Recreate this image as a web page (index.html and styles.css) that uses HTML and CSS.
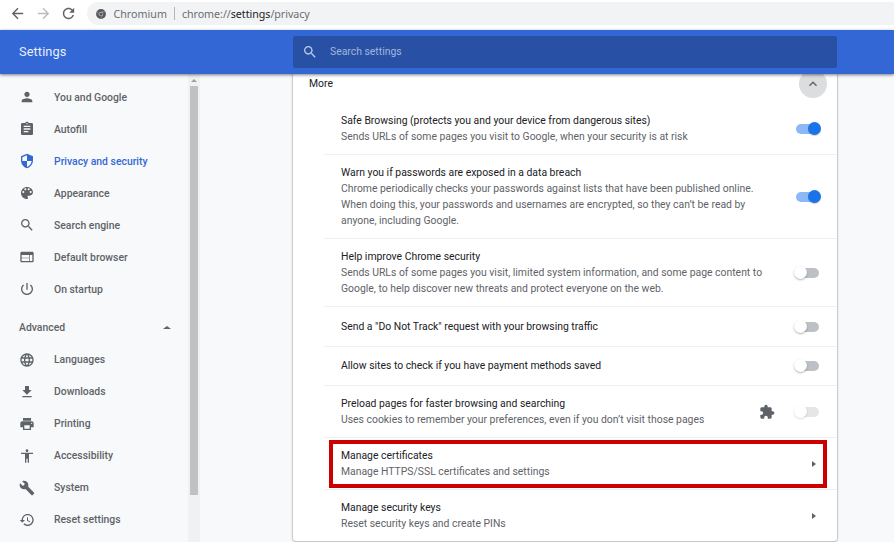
FILE: index.html
```html
<!DOCTYPE html>
<html lang="en">
<head>
<meta charset="utf-8">
<title>Settings</title>
<link rel="stylesheet" href="styles.css">
</head>
<body>
<div class="browser">
  <svg class="nav" viewBox="0 0 24 24"><path d="M20 11H7.83l5.59-5.59L12 4l-8 8 8 8 1.41-1.41L7.83 13H20v-2z"/></svg>
  <svg class="nav dim" viewBox="0 0 24 24"><path d="M12 4l-1.41 1.41L16.17 11H4v2h12.17l-5.58 5.59L12 20l8-8z"/></svg>
  <svg class="nav" viewBox="0 0 24 24"><path d="M17.65 6.35C16.2 4.9 14.21 4 12 4c-4.42 0-7.99 3.58-7.99 8s3.57 8 7.99 8c3.73 0 6.84-2.55 7.73-6h-2.08c-.82 2.33-3.04 4-5.65 4-3.31 0-6-2.69-6-6s2.69-6 6-6c1.66 0 3.14.69 4.22 1.78L13 11h7V4l-2.35 2.35z"/></svg>
  <div class="omnibox">
    <svg class="chip" viewBox="0 0 20 20"><circle cx="10" cy="10" r="9.8" fill="#55585c"/><g stroke="#a8abaf" stroke-width="1.2"><path d="M10 5.7h8.5M6.3 12.2L2 4.8M13.7 12.2L9.5 19.4"/></g><circle cx="10" cy="10" r="4.4" fill="#b9bbbe"/><circle cx="10" cy="10" r="3.2" fill="#55585c"/></svg>
    <span class="origin">Chromium</span><span class="bar"></span><span class="url">chrome://<b>settings</b>/privacy</span>
  </div>
</div>
<header class="toolbar">
  <h1>Settings</h1>
  <div class="search">
    <svg viewBox="0 0 24 24"><path d="M15.5 14h-.79l-.28-.27C15.41 12.59 16 11.11 16 9.5 16 5.91 13.09 3 9.5 3S3 5.91 3 9.5 5.91 16 9.5 16c1.61 0 3.09-.59 4.23-1.57l.27.28v.79l5 4.99L20.49 19l-4.99-5zm-6 0C7.01 14 5 11.99 5 9.5S7.01 5 9.5 5 14 7.01 14 9.5 11.99 14 9.5 14z"/></svg>
    <span>Search settings</span>
  </div>
</header>
<div class="main">
  <nav class="side">
    <a><svg viewBox="0 0 24 24"><path d="M12 12c2.21 0 4-1.79 4-4s-1.79-4-4-4-4 1.79-4 4 1.79 4 4 4zm0 2c-2.67 0-8 1.34-8 4v2h16v-2c0-2.66-5.33-4-8-4z"/></svg><span>You and Google</span></a>
    <a><svg viewBox="0 0 24 24"><path d="M19 3h-4.18C14.4 1.84 13.3 1 12 1c-1.3 0-2.4.84-2.82 2H5c-1.1 0-2 .9-2 2v14c0 1.1.9 2 2 2h14c1.1 0 2-.9 2-2V5c0-1.1-.9-2-2-2zm-7 0c.55 0 1 .45 1 1s-.45 1-1 1-1-.45-1-1 .45-1 1-1zm2 14H7v-2h7v2zm3-4H7v-2h10v2zm0-4H7V7h10v2z"/></svg><span>Autofill</span></a>
    <a class="active"><svg viewBox="0 0 24 24"><path d="M12 1L3 5v6c0 5.55 3.84 10.74 9 12 5.16-1.26 9-6.45 9-12V5l-9-4zm0 10.99h7c-.53 4.12-3.28 7.79-7 8.94V12H5V6.3l7-3.11v8.8z"/></svg><span>Privacy and security</span></a>
    <a><svg viewBox="0 0 24 24"><path d="M12 3c-4.97 0-9 4.03-9 9s4.03 9 9 9c.83 0 1.5-.67 1.5-1.5 0-.39-.15-.74-.39-1.01-.23-.26-.38-.61-.38-.99 0-.83.67-1.5 1.5-1.5H16c2.76 0 5-2.24 5-5 0-4.42-4.03-8-9-8zm-5.5 9c-.83 0-1.5-.67-1.5-1.5S5.67 9 6.5 9 8 9.67 8 10.5 7.33 12 6.5 12zm3-4C8.67 8 8 7.33 8 6.5S8.67 5 9.5 5s1.5.67 1.5 1.5S10.33 8 9.5 8zm5 0c-.83 0-1.5-.67-1.5-1.5S13.67 5 14.5 5s1.5.67 1.5 1.5S15.33 8 14.5 8zm3 4c-.83 0-1.5-.67-1.5-1.5S16.67 9 17.5 9s1.5.67 1.5 1.5-.67 1.5-1.5 1.5z"/></svg><span>Appearance</span></a>
    <a><svg viewBox="0 0 24 24"><path d="M15.5 14h-.79l-.28-.27C15.41 12.59 16 11.11 16 9.5 16 5.91 13.09 3 9.5 3S3 5.91 3 9.5 5.91 16 9.5 16c1.61 0 3.09-.59 4.23-1.57l.27.28v.79l5 4.99L20.49 19l-4.99-5zm-6 0C7.01 14 5 11.99 5 9.5S7.01 5 9.5 5 14 7.01 14 9.5 11.99 14 9.5 14z"/></svg><span>Search engine</span></a>
    <a><svg viewBox="0 0 24 24"><path d="M20 4H4c-1.1 0-1.99.9-1.99 2L2 18c0 1.1.9 2 2 2h16c1.1 0 2-.9 2-2V6c0-1.1-.9-2-2-2zm-5 14H4v-4h11v4zm0-5H4V9h11v4zm5 5h-4V9h4v9z"/></svg><span>Default browser</span></a>
    <a><svg viewBox="0 0 24 24"><path d="M13 3h-2v10h2V3zm4.83 2.17l-1.42 1.42C17.99 7.86 19 9.81 19 12c0 3.87-3.13 7-7 7s-7-3.13-7-7c0-2.19 1.01-4.14 2.58-5.42L6.17 5.17C4.23 6.82 3 9.26 3 12c0 4.97 4.03 9 9 9s9-4.03 9-9c0-2.74-1.23-5.18-3.17-6.83z"/></svg><span>On startup</span></a>
    <div class="advanced"><span>Advanced</span><i></i></div>
    <a><svg viewBox="0 0 24 24"><path d="M11.99 2C6.47 2 2 6.48 2 12s4.47 10 9.99 10C17.52 22 22 17.52 22 12S17.52 2 11.99 2zm6.93 6h-2.95c-.32-1.25-.78-2.45-1.38-3.56 1.84.63 3.37 1.91 4.33 3.56zM12 4.04c.83 1.2 1.48 2.53 1.91 3.96h-3.82c.43-1.43 1.08-2.76 1.91-3.96zM4.26 14C4.1 13.36 4 12.69 4 12s.1-1.36.26-2h3.38c-.08.66-.14 1.32-.14 2s.06 1.34.14 2H4.26zm.82 2h2.95c.32 1.25.78 2.45 1.38 3.56-1.84-.63-3.37-1.9-4.33-3.56zm2.95-8H5.08c.96-1.66 2.49-2.93 4.33-3.56C8.81 5.55 8.35 6.75 8.03 8zM12 19.96c-.83-1.2-1.48-2.53-1.91-3.96h3.82c-.43 1.43-1.08 2.76-1.91 3.96zM14.34 14H9.66c-.09-.66-.16-1.32-.16-2s.07-1.35.16-2h4.68c.09.65.16 1.32.16 2s-.07 1.34-.16 2zm.25 5.56c.6-1.11 1.06-2.31 1.38-3.56h2.95c-.96 1.65-2.49 2.93-4.33 3.56zM16.36 14c.08-.66.14-1.32.14-2s-.06-1.34-.14-2h3.38c.16.64.26 1.31.26 2s-.1 1.36-.26 2h-3.38z"/></svg><span>Languages</span></a>
    <a><svg viewBox="0 0 24 24"><path d="M19 9h-4V3H9v6H5l7 7 7-7zM5 18v2h14v-2H5z"/></svg><span>Downloads</span></a>
    <a><svg viewBox="0 0 24 24"><path d="M19 8H5c-1.66 0-3 1.34-3 3v6h4v4h12v-4h4v-6c0-1.66-1.34-3-3-3zm-3 11H8v-5h8v5zm3-7c-.55 0-1-.45-1-1s.45-1 1-1 1 .45 1 1-.45 1-1 1zm-1-9H6v4h12V3z"/></svg><span>Printing</span></a>
    <a><svg viewBox="0 0 24 24"><path d="M12 2c1.1 0 2 .9 2 2s-.9 2-2 2-2-.9-2-2 .9-2 2-2zm9 7h-6v13h-2v-6h-2v6H9V9H3V7h18v2z"/></svg><span>Accessibility</span></a>
    <a><svg viewBox="0 0 24 24"><path d="M22.7 19l-9.1-9.1c.9-2.3.4-5-1.5-6.9-2-2-5-2.4-7.4-1.3L9 6 6 9 1.6 4.7C.4 7.1.9 10.1 2.9 12.1c1.9 1.9 4.6 2.4 6.9 1.5l9.1 9.1c.4.4 1 .4 1.4 0l2.3-2.3c.5-.4.5-1.1.1-1.4z"/></svg><span>System</span></a>
    <a><svg viewBox="0 0 24 24"><path d="M13 3c-4.97 0-9 4.03-9 9H1l3.89 3.89.07.14L9 12H6c0-3.87 3.13-7 7-7s7 3.13 7 7-3.13 7-7 7c-1.93 0-3.68-.79-4.94-2.06l-1.42 1.42C8.27 19.99 10.51 21 13 21c4.97 0 9-4.03 9-9s-4.03-9-9-9zm-1 5v5l4.28 2.54.72-1.21-3.5-2.08V8H12z"/></svg><span>Reset settings</span></a>
  </nav>
  <div class="scroll"><i class="up"></i><div class="thumb"></div></div>
  <section class="card">
    <div class="more"><span>More</span><div class="round"><svg viewBox="0 0 24 24"><path d="M12 8l-6 6 1.41 1.41L12 10.83l4.59 4.58L18 14z"/></svg></div></div>
    <div class="row r1"><div class="text"><p>Safe Browsing (protects you and your device from dangerous sites)</p><p class="sub">Sends URLs of some pages you visit to Google, when your security is at risk</p></div><div class="toggle on"></div></div>
    <div class="row r2"><div class="text"><p>Warn you if passwords are exposed in a data breach</p><p class="sub">Chrome periodically checks your passwords against lists that have been published online.<br>When doing this, your passwords and usernames are encrypted, so they can’t be read by<br>anyone, including Google.</p></div><div class="toggle on"></div></div>
    <div class="row r3"><div class="text"><p>Help improve Chrome security</p><p class="sub">Sends URLs of some pages you visit, limited system information, and some page content to<br>Google, to help discover new threats and protect everyone on the web.</p></div><div class="toggle"></div></div>
    <div class="row r4 dnt"><div class="text"><p>Send a "Do Not Track" request with your browsing traffic</p></div><div class="toggle"></div></div>
    <div class="row r4"><div class="text"><p>Allow sites to check if you have payment methods saved</p></div><div class="toggle"></div></div>
    <div class="row r1"><div class="text"><p>Preload pages for faster browsing and searching</p><p class="sub">Uses cookies to remember your preferences, even if you don’t visit those pages</p></div><svg class="puzzle" viewBox="0 0 24 24"><path d="M20.5 11H19V7c0-1.1-.9-2-2-2h-4V3.5C13 2.12 11.88 1 10.5 1S8 2.12 8 3.5V5H4c-1.1 0-1.99.9-1.99 2v3.8H3.5c1.49 0 2.7 1.21 2.7 2.7s-1.21 2.7-2.7 2.7H2V20c0 1.1.9 2 2 2h3.8v-1.5c0-1.49 1.21-2.7 2.7-2.7 1.49 0 2.7 1.21 2.7 2.7V22H17c1.1 0 2-.9 2-2v-4h1.5c1.38 0 2.5-1.12 2.5-2.5S21.88 11 20.5 11z"/></svg><div class="toggle off"></div></div>
    <div class="row r1 marked"><div class="text"><p>Manage certificates</p><p class="sub">Manage HTTPS/SSL certificates and settings</p></div><i class="arrow"></i></div>
    <div class="row r1"><div class="text"><p>Manage security keys</p><p class="sub">Reset security keys and create PINs</p></div><i class="arrow"></i></div>
  </section>
</div>
</body>
</html>
```
FILE: styles.css
```css
*, *::before, *::after { box-sizing: border-box; }
body { margin: 0; width: 894px; height: 542px; overflow: hidden; display: flex; flex-direction: column; background: #f8f9fa; font-family: Roboto, sans-serif; font-size: 10.4px; line-height: 16px; color: #202124; }
p, h1 { margin: 0; white-space: nowrap; }
svg { fill: #5f6368; flex: none; display: block; }

.browser { height: 30px; flex: none; background: #fff; display: flex; align-items: center; padding: 0 0 3px 9px; }
.nav { width: 17px; height: 17px; margin-right: 8.5px; }
.nav.dim { fill: #b9bbbd; }
.omnibox { flex: 1; height: 23px; border-radius: 12px 0 0 12px; background: #f1f3f4; display: flex; align-items: center; padding-left: 9px; margin-left: 1px; font-family: "Noto Sans", sans-serif; font-size: 10.7px; color: #6b6e72; white-space: nowrap; }
.chip { width: 10px; height: 10px; margin-right: 8px; }
.bar { width: 1px; height: 13px; background: #b4b6b9; margin: 0 7px 0 7px; }
.url { letter-spacing: -.04px; }
.url b { font-weight: 400; color: #202124; }

.toolbar { height: 44px; flex: none; background: #3367d6; display: flex; align-items: center; padding-left: 19px; box-shadow: 0 1px 3px rgba(0,0,0,.5); position: relative; z-index: 2; }
.toolbar h1 { width: 274px; font-size: 12.8px; font-weight: 400; color: #e8eefb; letter-spacing: .1px; }
.search { width: 544px; height: 32px; background: #2851a6; border-radius: 2px; display: flex; align-items: center; gap: 12px; padding-left: 9px; color: #a3b5dc; }
.search svg { width: 16px; height: 16px; fill: #bccae8; }

.main { flex: 1; min-height: 0; display: flex; }
.side { width: 188px; padding-top: 7px; color: #5f6368; font-weight: 500; }
.side a { height: 32px; display: flex; align-items: center; padding-left: 19px; gap: 19px; }
.side a span { padding-top: 1px; }
.side a svg { width: 16px; height: 16px; }
.side .active { color: #3367d6; }
.side .active svg { fill: #3367d6; }
.advanced { height: 38.6px; padding: 7px 17px 0 19px; display: flex; align-items: center; justify-content: space-between; }
.advanced i { border: 4px solid transparent; border-top: 0; border-bottom-color: #5f6368; border-bottom-width: 3.5px; }
.scroll { width: 12px; background: #f1f1f1; padding: 5px 2px 0 1.5px; }
.up { display: block; width: 0; margin: 0 auto 4px; border: 3px solid transparent; border-top: 0; border-bottom-color: #a0a0a0; }
.thumb { height: 409px; background: #c1c1c1; }

.card { width: 544px; height: 467px; margin-left: 93px; background: #fff; border-radius: 0 0 3px 3px; box-shadow: 0 0 1px 1px rgba(60,64,67,.2), 0 1px 3px rgba(60,64,67,.18); }
.more { height: 28px; padding: 0 10px 8px 16px; display: flex; align-items: center; justify-content: space-between; }
.round { width: 28px; height: 28px; flex: none; border-radius: 50%; background: #dcddde; display: flex; align-items: center; justify-content: center; }
.round svg { width: 16px; height: 16px; }
.row { margin-left: 31px; padding: 0 16px 0 17px; display: flex; align-items: center; border-bottom: 1px solid #f0f0f0; }
.row:last-child { border-bottom: 0; }
.text { flex: 1; }
.sub { color: #5f6368; }
.r1 { height: 52px; }
.r1:nth-child(2) { height: 53px; padding-top: 1px; }
.r2 { height: 84px; }
.r3 { height: 68px; }
.r4 { height: 39.5px; }
.dnt { padding-top: 1px; }
.toggle { width: 22px; height: 10px; border-radius: 5px; background: #bdc1c6; margin-right: 2px; position: relative; }
.toggle::after { content: ""; position: absolute; top: -1.5px; left: -3px; width: 13px; height: 13px; border-radius: 50%; background: #fff; box-shadow: 0 1px 2px rgba(0,0,0,.3); }
.toggle.on { background: #8cb8f5; margin-right: 3px; }
.toggle.on::after { left: 12px; background: #1a73e8; box-shadow: 0 1px 1px rgba(0,0,0,.2); }
.toggle.off { background: #e5e6e8; }
.toggle.off::after { box-shadow: 0 1px 2px rgba(0,0,0,.15); }
.puzzle { width: 16px; height: 16px; margin-right: 22px; }
.arrow { border: 3.5px solid transparent; border-right: 0; border-left: 4px solid #5f6368; margin-right: 5.5px; }
.marked { position: relative; }
.marked::before { content: ""; position: absolute; left: 5px; top: 2px; width: 498px; height: 48px; border: 4px solid #c00; }
```
